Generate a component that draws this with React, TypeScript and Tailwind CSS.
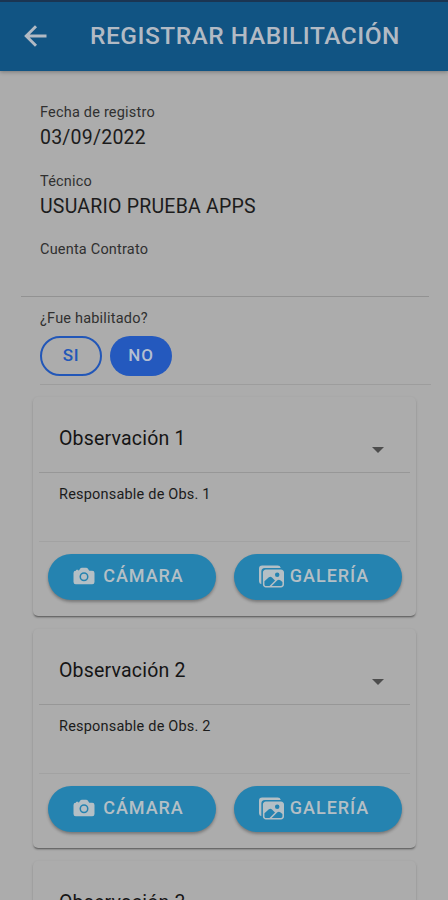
import React from 'react';
import { IoCamera, IoImages } from 'react-icons/io5';

interface FieldProps {
  label: string;
  value?: string;
}

const Field: React.FC<FieldProps> = ({ label, value }) => (
  <div className="h-[68.5px] pl-10">
    <p className="text-[14.5px] leading-[18px] tracking-[0.2px] text-[#303030]">{label}</p>
    <p className="mt-[4px] text-[19.5px] leading-[24px] tracking-[0.22px] text-[#1c1c1c]">{value}</p>
  </div>
);

interface ActionButtonProps {
  icon: React.ReactNode;
  label: string;
}

const ActionButton: React.FC<ActionButtonProps> = ({ icon, label }) => (
  <button className="flex h-[46px] w-[168px] items-center justify-center rounded-full bg-[#2583b0] pr-[8px] pb-0.5 text-[18px] font-medium tracking-[0.95px] text-[#b4bfc5] shadow-[0_2px_3px_rgba(0,0,0,0.3)]">
    {icon}
    <span className="leading-none">{label}</span>
  </button>
);

const ObservationCard: React.FC<{ index: number }> = ({ index }) => (
  <div className="h-[219px] shrink-0 rounded-[5px] px-1.5 shadow-[0_2px_2px_-1px_rgba(0,0,0,0.45),0_1px_3px_rgba(0,0,0,0.12)]">
    <div className="flex h-[76px] items-center justify-between border-b border-[#979797] pl-5 pr-[26px] pt-2">
      <span className="text-[19.5px] leading-6 tracking-[0.2px] text-[#151515]">Observación {index}</span>
      <svg className="mt-[22px] h-[6px] w-[12px]" viewBox="0 0 12 6" fill="#4d4d4d">
        <path d="M0 0h12L6 6z" />
      </svg>
    </div>
    <div className="h-[69px] border-b border-[#a2a2a2] pl-5 pt-[13px]">
      <span className="block text-[14.5px] leading-[18px] tracking-[0.2px] text-[#1b1b1b]">Responsable de Obs. {index}</span>
    </div>
    <div className="flex gap-[18px] pl-[9px] pt-3">
      <ActionButton icon={<IoCamera className="mr-[7px] h-[24px] w-[24px]" />} label="CÁMARA" />
      <ActionButton icon={<IoImages className="mr-[6px] h-[25px] w-[25px]" />} label="GALERÍA" />
    </div>
  </div>
);

const RegistrarHabilitacion: React.FC = () => {
  return (
    <div className="flex h-[900px] w-full flex-col overflow-hidden bg-[#acacac] font-[Roboto,sans-serif]">
      <header className="flex h-[71px] shrink-0 items-center border-t-2 border-[#1b3552] bg-[#115483] pl-[24px] text-[#b2bac4] shadow-[0_1px_4px_rgba(0,0,0,0.3)]">
        <svg className="-mt-px h-[22px] w-[23px]" viewBox="0 0 23 22" fill="none" stroke="currentColor" strokeWidth="2.9">
          <path d="M22.5 11H2.5M12 1.2 2.2 11 12 20.8" />
        </svg>
        <h1 className="-mt-px ml-[43px] text-[24.5px] leading-8 font-medium tracking-[0.5px] whitespace-nowrap">REGISTRAR HABILITACIÓN</h1>
      </header>

      <section className="h-[225px] shrink-0 pt-[33px]">
        <Field label="Fecha de registro" value="03/09/2022" />
        <Field label="Técnico" value="USUARIO PRUEBA APPS" />
        <Field label="Cuenta Contrato" />
      </section>
      <div className="ml-[21px] mr-[19px] h-px shrink-0 bg-[#929292]" />

      <section className="ml-10 mr-[17px] h-[88px] shrink-0 border-b border-[#9d9d9d] pt-[13px]">
        <p className="text-[14.5px] leading-[18px] tracking-[0.2px] text-[#303030]">¿Fue habilitado?</p>
        <div className="mt-2 flex gap-2 text-[17px] font-medium tracking-[0.8px]">
          <button className="h-[40px] w-[62px] rounded-full border-2 border-[#2257b8] text-[#2257b8]">SI</button>
          <button className="h-[40px] w-[62px] rounded-full bg-[#2459be] text-[#b4bfd0]">NO</button>
        </div>
      </section>

      <main className="ml-[33px] mr-[32px] mt-3 flex flex-col gap-[13px]">
        {[1, 2, 3].map((n) => (
          <ObservationCard key={n} index={n} />
        ))}
      </main>
    </div>
  );
};

export default RegistrarHabilitacion;
